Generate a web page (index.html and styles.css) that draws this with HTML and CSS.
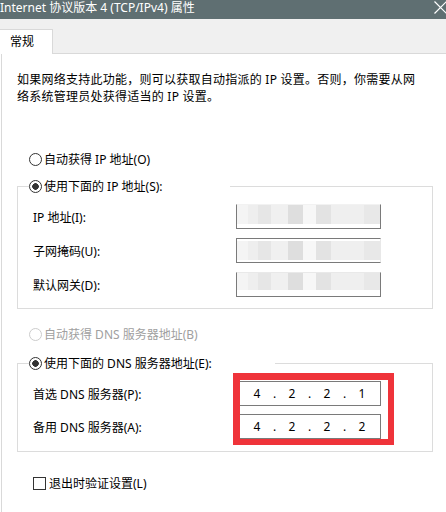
FILE: index.html
```html
<!DOCTYPE html>
<html lang="zh-CN">
<head>
<meta charset="utf-8">
<title>Internet 协议版本 4 (TCP/IPv4) 属性</title>
<link rel="stylesheet" href="styles.css">
</head>
<body>
<div class="window">
  <div class="titlebar">
    <span class="title">Internet 协议版本 4 (TCP/IPv4) 属性</span>
    <svg class="close" width="13" height="13" viewBox="0 0 13 13"><path d="M0.5 0.5 L12.5 12.5 M12.5 0.5 L0.5 12.5" stroke="#ffffff" stroke-width="1.2" fill="none"/></svg>
  </div>
  <div class="tabstrip"><div class="tab">常规</div></div>
  <div class="panel">
    <p class="intro">如果网络支持此功能，则可以获取自动指派的 IP 设置。否则，你需要从网<br>络系统管理员处获得适当的 IP 设置。</p>

    <div class="option opt-top"><span class="radio"></span>自动获得 IP 地址(O)</div>

    <fieldset class="group group-ip">
      <legend class="legend legend-ip"><span class="radio checked"></span>使用下面的 IP 地址(S):</legend>
      <div class="rows">
        <div class="row"><span class="label">IP 地址(I):</span><div class="ipbox blur blur-a"><span></span><span></span><span></span><span></span><span></span><span></span><span></span><span></span><span></span></div></div>
        <div class="row"><span class="label">子网掩码(U):</span><div class="ipbox blur blur-b"><span></span><span></span><span></span><span></span><span></span><span></span><span></span><span></span><span></span></div></div>
        <div class="row"><span class="label">默认网关(D):</span><div class="ipbox blur blur-c"><span></span><span></span><span></span><span></span><span></span><span></span><span></span><span></span><span></span></div></div>
      </div>
    </fieldset>

    <div class="option disabled opt-dns"><span class="radio"></span>自动获得 DNS 服务器地址(B)</div>

    <fieldset class="group group-dns">
      <legend class="legend legend-dns"><span class="radio checked"></span>使用下面的 DNS 服务器地址(E):</legend>
      <div class="rows dns-rows">
        <div class="row"><span class="label">首选 DNS 服务器(P):</span><div class="ipbox ip"><span class="oct">4</span><span class="dot">.</span><span class="oct">2</span><span class="dot">.</span><span class="oct">2</span><span class="dot">.</span><span class="oct">1</span></div></div>
        <div class="row"><span class="label">备用 DNS 服务器(A):</span><div class="ipbox ip"><span class="oct">4</span><span class="dot">.</span><span class="oct">2</span><span class="dot">.</span><span class="oct">2</span><span class="dot">.</span><span class="oct">2</span></div></div>
        <div class="highlight"></div>
      </div>
    </fieldset>

    <div class="check-row"><span class="checkbox"></span>退出时验证设置(L)</div>
  </div>
</div>
</body>
</html>
```

FILE: styles.css
```css
html, body {
  margin: 0;
  padding: 0;
  background: #ffffff;
}
body {
  width: 446px;
  height: 512px;
  overflow: hidden;
  font-family: "Noto Sans", "Noto Sans CJK SC", sans-serif;
  font-size: 12px;
  color: #000000;
}
.window {
  width: 446px;
  height: 512px;
  overflow: hidden;
  display: flex;
  flex-direction: column;
}
.titlebar {
  height: 19px;
  flex: none;
  background: #5f6f72;
  color: #ffffff;
  display: flex;
  justify-content: space-between;
  align-items: flex-start;
  overflow: hidden;
}
.title {
  line-height: 14px;
  margin-top: 1px;
  margin-left: 0;
  white-space: nowrap;
}
.close {
  margin-top: 1px;
  margin-right: -1px;
  flex: none;
}
.tabstrip {
  height: 34px;
  flex: none;
  background: #f0f0f0;
  border-bottom: 1px solid #d9d9d9;
  display: flex;
  align-items: flex-end;
}
.tab {
  width: 42px;
  height: 24px;
  padding-left: 10px;
  background: #ffffff;
  border-top: 1px solid #d9d9d9;
  border-right: 1px solid #d9d9d9;
  margin-bottom: -1px;
  line-height: 24px;
}
.panel {
  flex: 1;
  margin-left: 1px;
  border-left: 1px solid #d9d9d9;
  background: #ffffff;
  padding-left: 15px;
  display: flex;
  flex-direction: column;
  align-items: flex-start;
}
.intro {
  margin: 17px 0 0 0;
  line-height: 17px;
  white-space: nowrap;
  letter-spacing: 0.25px;
}
.option {
  height: 18px;
  display: flex;
  align-items: center;
  margin-left: 12px;
  white-space: nowrap;
}
.opt-top { margin-top: 45px; }
.opt-dns { margin-top: 16px; }
.radio {
  width: 11px;
  height: 11px;
  border: 1px solid #333333;
  border-radius: 50%;
  background: #ffffff;
  margin-right: 2px;
  flex: none;
}
.radio.checked {
  background: radial-gradient(circle, #333333 0, #333333 3px, #ffffff 3.6px);
}
.disabled { color: #a0a0a0; }
.disabled .radio { border-color: #cccccc; }
.group {
  margin: 0;
  padding: 0;
  border: 1px solid #dcdcdc;
  width: 416px;
  box-sizing: border-box;
  min-width: 0;
}
.group-ip { margin-top: 9px; }
.group-dns { margin-top: 11px; }
.legend {
  padding: 0;
  margin-left: 11px;
  height: 18px;
  display: flex;
  align-items: center;
  background: #ffffff;
  white-space: nowrap;
  box-sizing: border-box;
}
.legend-ip { width: 201px; }
.legend-dns { width: 246px; }
.rows {
  display: flex;
  flex-direction: column;
  gap: 9px;
  padding: 9px 0 11px 0;
}
.dns-rows {
  position: relative;
  gap: 8px;
  padding-bottom: 12px;
}
.row {
  display: flex;
  align-items: center;
  padding-left: 15px;
  height: 25px;
}
.label {
  width: 203px;
  white-space: nowrap;
}
.ipbox {
  width: 145px;
  height: 25px;
  box-sizing: border-box;
  border: 1px solid #7a7a7a;
  background: #ffffff;
  flex: none;
}
.ip {
  display: flex;
  padding-left: 10px;
  line-height: 23px;
}
.oct {
  width: 20px;
  text-align: center;
}
.dot {
  width: 15px;
  text-align: center;
}
.blur {
  display: flex;
  align-items: flex-start;
  overflow: hidden;
}
.blur span {
  height: 19px;
  flex: none;
}
.blur span:nth-child(1) { width: 11px; background: #f4f4f4; }
.blur span:nth-child(2) { width: 10px; background: #eeeeee; }
.blur span:nth-child(3) { width: 13px; background: #e6e6e6; }
.blur span:nth-child(4) { width: 17px; background: #f0f0f0; }
.blur span:nth-child(5) { width: 15px; background: #dedede; }
.blur span:nth-child(6) { width: 13px; background: #f7f7f7; }
.blur span:nth-child(7) { width: 15px; background: #e3e3e3; }
.blur span:nth-child(8) { width: 33px; background: #efefef; }
.blur span:nth-child(9) { width: 16px; background: #e8e8e8; }
.blur-a { border-top-color: #f2f2f2; }
.blur-a span { margin-top: -1px; height: 20px; }
.blur-b span { margin-top: 2px; }
.blur-b { border-right-color: #e8e8e8; }
.blur-c { border-top-color: #e9e9e9; }
.blur-c span { margin-top: -1px; height: 18px; }
.highlight {
  position: absolute;
  left: 215px;
  top: 1px;
  width: 161px;
  height: 72px;
  box-sizing: border-box;
  border-style: solid;
  border-color: #ef333a;
  border-width: 7px 6px 6px 7px;
}
.check-row {
  margin-top: 22px;
  margin-left: 16px;
  height: 18px;
  display: flex;
  align-items: center;
  white-space: nowrap;
}
.checkbox {
  width: 11px;
  height: 11px;
  border: 1px solid #333333;
  background: #ffffff;
  margin-right: 3px;
  flex: none;
}
```
